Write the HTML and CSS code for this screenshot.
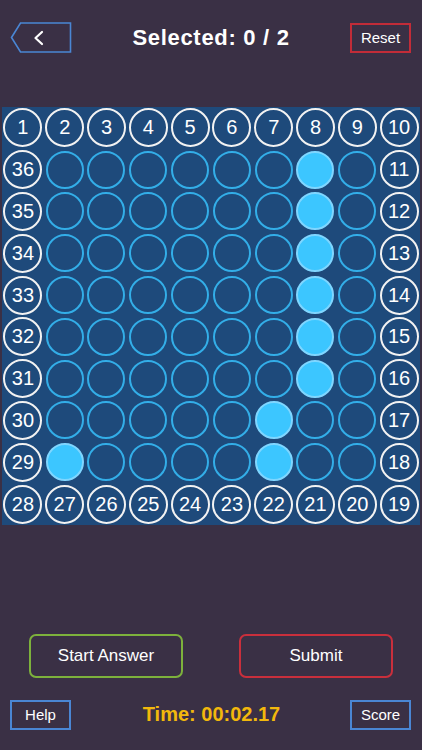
FILE: index.html
```html
<!DOCTYPE html>
<html lang="en">
<head>
  <meta charset="UTF-8" />
  <meta name="viewport" content="width=device-width, initial-scale=1.0"/>
  <title>Selected</title>
  <link rel="stylesheet" href="styles.css">
</head>
<body>
  <div class="screen">
    <div class="top-bar">
      <button class="back-btn" type="button">
        <svg width="62" height="31" viewBox="0 0 62 31">
          <polygon points="1.5,15.5 10.5,1 60.5,1 60.5,30 10.5,30" fill="none" stroke="#4a86d4" stroke-width="1.6"/>
          <polyline points="32,10 25.5,16 32,22" fill="none" stroke="#fff" stroke-width="2.2" stroke-linecap="round" stroke-linejoin="round"/>
        </svg>
      </button>
      <div class="title">Selected: 0 / 2</div>
      <button class="small-btn red" type="button">Reset</button>
    </div>

    <div class="board" id="board"></div>

    <div class="actions">
      <button class="big-btn green" type="button">Start Answer</button>
      <button class="big-btn red" type="button">Submit</button>
    </div>

    <div class="bottom-bar">
      <button class="small-btn blue" type="button">Help</button>
      <div class="timer">Time: 00:02.17</div>
      <button class="small-btn blue" type="button">Score</button>
    </div>
  </div>

  <script>
    // cells that are lit up (row,col)
    const lit = ['1,7','2,7','3,7','4,7','5,7','6,7','7,6','8,6','8,1'];
    const board = document.getElementById('board');

    for (let r = 0; r < 10; r++) {
      for (let c = 0; c < 10; c++) {
        const cell = document.createElement('div');
        cell.className = 'cell';
        const dot = document.createElement('div');
        let n = 0;
        if (r == 0) n = c + 1;
        else if (c == 9) n = 10 + r;
        else if (r == 9) n = 19 + (9 - c);
        else if (c == 0) n = 37 - r;

        if (n) {
          dot.className = 'dot edge';
          dot.textContent = n;
        } else if (lit.includes(r + ',' + c)) {
          dot.className = 'dot on';
        } else {
          dot.className = 'dot';
        }
        cell.appendChild(dot);
        board.appendChild(cell);
      }
    }
  </script>
</body>
</html>
```

FILE: styles.css
```css
body {
  margin: 0;
  background: #3a3045;
  font-family: "Liberation Sans", Arial, sans-serif;
  color: #fff;
}
.screen {
  width: 422px;
  height: 750px;
}
button {
  font-family: inherit;
  color: #fff;
  background: transparent;
  cursor: pointer;
}
.top-bar, .bottom-bar {
  display: flex;
  align-items: center;
  justify-content: space-between;
  padding: 0 11px 0 10px;
  height: 31px;
}
.top-bar {
  padding-top: 22px;
}
.back-btn {
  border: none;
  padding: 0;
  width: 62px;
  height: 31px;
}
.back-btn svg {
  display: block;
}
.title {
  font-size: 22px;
  font-weight: bold;
  letter-spacing: 0.7px;
}
.small-btn {
  width: 61px;
  height: 30px;
  font-size: 15px;
  padding: 0;
  border: 2px solid;
}
.small-btn.red {
  border-color: #c22c38;
}
.small-btn.blue {
  border-color: #4a86d4;
}
.board {
  margin: 54px 0 0 2px;
  width: 418px;
  height: 418px;
  background: #1e4a7b;
  display: grid;
  grid-template-columns: repeat(10, 1fr);
  grid-template-rows: repeat(10, 1fr);
}
.cell {
  display: flex;
  align-items: center;
  justify-content: center;
}
.dot {
  width: 38px;
  height: 38px;
  box-sizing: border-box;
  border-radius: 50%;
  border: 2px solid #33aee8;
  display: flex;
  align-items: center;
  justify-content: center;
  font-size: 20px;
}
.dot.edge {
  width: 39px;
  height: 39px;
  border-color: #f2f2f2;
}
.dot.on {
  background: #3cc6ff;
  border-color: #7fd6ff;
}
.actions {
  display: flex;
  justify-content: space-between;
  padding: 0 29px;
  margin-top: 109px;
}
.big-btn {
  width: 154px;
  height: 44px;
  border: 2px solid;
  border-radius: 7px;
  font-size: 17px;
}
.big-btn.green {
  border-color: #7db13c;
}
.big-btn.red {
  border-color: #c92f3c;
}
.bottom-bar {
  margin-top: 21px;
}
.timer {
  color: #f2b80c;
  font-size: 20px;
  font-weight: bold;
  margin-left: 2px;
}
```
